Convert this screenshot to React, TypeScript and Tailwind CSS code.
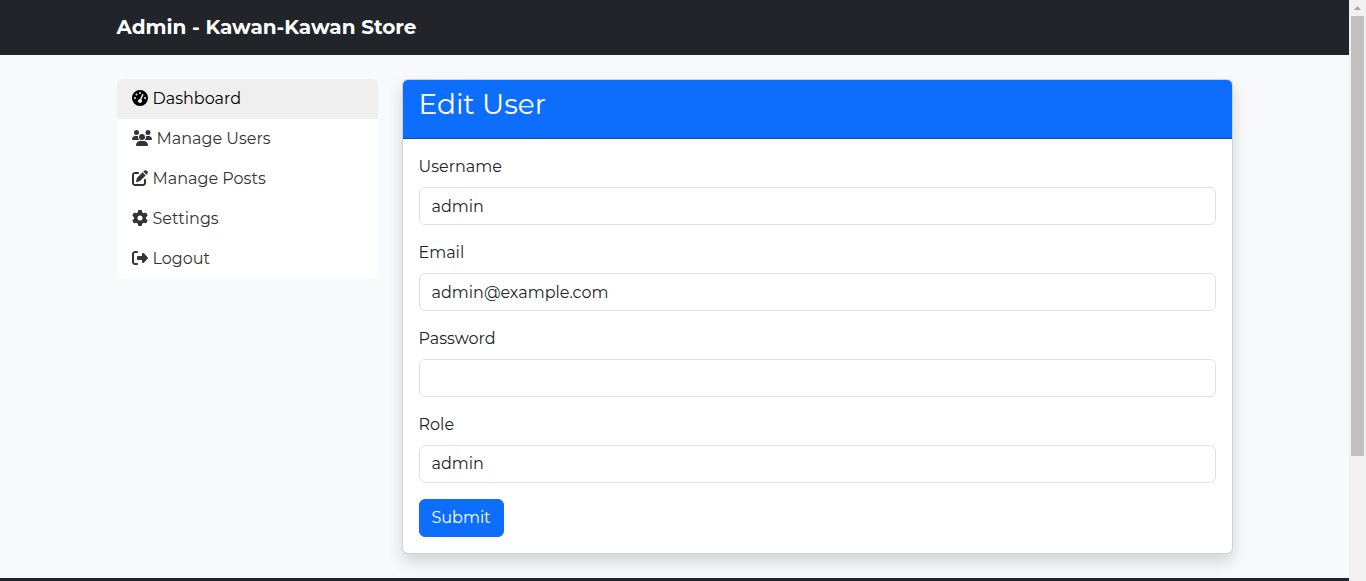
import type { ReactNode } from "react";
import { FaGaugeHigh, FaGear, FaPenToSquare, FaRightFromBracket, FaUsers } from "react-icons/fa6";

const links: { label: string; icon: ReactNode; active?: boolean }[] = [
  { label: "Dashboard", icon: <FaGaugeHigh className="h-4 w-4" />, active: true },
  { label: "Manage Users", icon: <FaUsers className="h-4 w-5" /> },
  { label: "Manage Posts", icon: <FaPenToSquare className="h-4 w-4" /> },
  { label: "Settings", icon: <FaGear className="h-4 w-4" /> },
  { label: "Logout", icon: <FaRightFromBracket className="h-4 w-4" /> },
];

const fields = [
  { id: "username", label: "Username", type: "text", value: "admin" },
  { id: "email", label: "Email", type: "email", value: "admin@example.com" },
  { id: "password", label: "Password", type: "password", value: "" },
];

const control =
  "block h-[38px] w-full appearance-none rounded-md border border-[#dee2e6] bg-white px-3 py-1.5 text-base leading-6 font-normal text-[#212529] outline-none focus:border-[#86b7fe]";

function Sidebar() {
  return (
    <nav className="col-span-3 self-start overflow-hidden rounded-md bg-white" aria-label="Admin">
      {links.map((link) => (
        <a
          key={link.label}
          href="#"
          aria-current={link.active ? "page" : undefined}
          className={
            link.active
              ? "flex h-10 items-center gap-[5px] bg-[#efefef] px-[15px] text-black"
              : "flex h-10 items-center gap-[5px] px-[15px] text-[#333333] hover:bg-[#efefef]"
          }
        >
          <span className="pb-0.5">{link.icon}</span>
          <span>{link.label}</span>
        </a>
      ))}
    </nav>
  );
}

function EditUserCard() {
  return (
    <section className="col-span-9 rounded-md border border-black/18 bg-white shadow-[0_8px_16px_rgba(0,0,0,0.15)]">
      <header className="rounded-t-[5px] border-b border-black/30 bg-[#0d6efd] px-4 py-2">
        <h3 className="mb-2.5 text-[28px] leading-8 font-normal text-white">Edit User</h3>
      </header>
      <form className="flex flex-col items-start gap-4 p-4" onSubmit={(e) => e.preventDefault()}>
        {fields.map((field) => (
          <div key={field.id} className="w-full">
            <label htmlFor={field.id} className="mb-2 block">
              {field.label}
            </label>
            <input id={field.id} type={field.type} defaultValue={field.value} className={control} />
          </div>
        ))}
        <div className="w-full">
          <label htmlFor="role" className="mb-2 block">
            Role
          </label>
          <select id="role" defaultValue="admin" className={control}>
            <option value="admin">admin</option>
            <option value="user">user</option>
          </select>
        </div>
        <button
          type="submit"
          className="rounded-md border border-[#0d6efd] bg-[#0d6efd] px-3 py-1.5 text-white hover:bg-[#0b5ed7]"
        >
          Submit
        </button>
      </form>
    </section>
  );
}

function ScrollTrack() {
  return (
    <div className="flex w-[17px] shrink-0 flex-col items-center bg-[#f1f1f1]" aria-hidden="true">
      <div className="flex h-4 items-center">
        <svg viewBox="0 0 7 4" className="h-1 w-[7px] fill-[#a3a3a3]">
          <path d="M3.5 0 7 4H0Z" />
        </svg>
      </div>
      <div className="h-[440px] w-[13px] bg-[#c1c1c1]" />
    </div>
  );
}

export default function App() {
  return (
    <div className="flex min-h-screen font-[Montserrat,Inter,sans-serif] text-base font-normal text-[#212529]">
      <div className="flex min-w-0 flex-1 flex-col bg-[#f8f9fa]">
        <header className="bg-[#212529]">
          <div className="mx-auto flex max-w-[1140px] px-3 pt-[13px] pb-[14px]">
            <a href="#" className="text-xl font-bold text-white">
              Admin - Kawan-Kawan Store
            </a>
          </div>
        </header>
        <main className="mx-auto grid w-full max-w-[1140px] grid-cols-12 gap-6 px-3 py-6">
          <Sidebar />
          <EditUserCard />
        </main>
        <footer className="flex-1 bg-[#212529]" />
      </div>
      <ScrollTrack />
    </div>
  );
}
